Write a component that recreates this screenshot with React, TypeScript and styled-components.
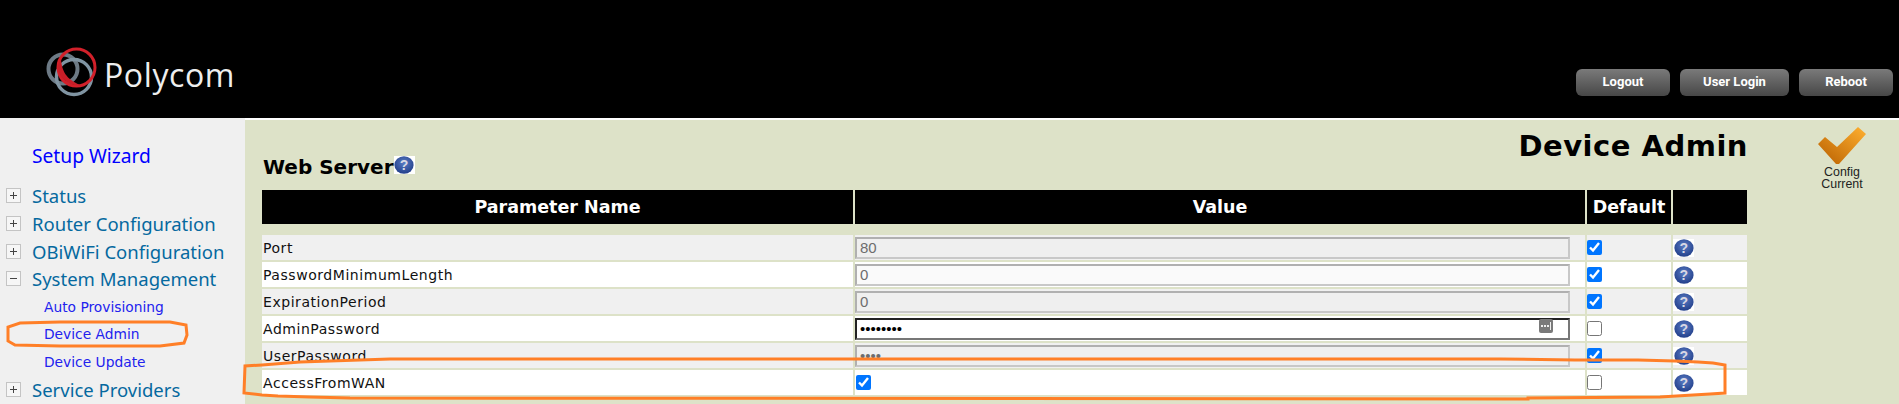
import React from 'react'
import styled, { createGlobalStyle } from 'styled-components'

const GlobalStyle = createGlobalStyle`
  html, body {
    margin: 0;
    padding: 0;
    height: 404px;
    overflow: hidden;
    background: #fff;
  }
  * { box-sizing: border-box; }
`

const Page = styled.div`
  position: relative;
  width: 1899px;
  height: 404px;
  overflow: hidden;
  font-family: 'DejaVu Sans', Verdana, sans-serif;
`
const Header = styled.header`
  display: flex;
  justify-content: space-between;
  align-items: flex-end;
  height: 118px;
  background: #000;
  padding: 0 6px 22px 46px;
`
const Logo = styled.div`
  display: flex;
  align-items: flex-start;
  margin-bottom: -1px;
`
const LogoText = styled.span`
  font-family: 'Open Sans', sans-serif;
  font-weight: 400;
  font-size: 32px;
  line-height: 36px;
  letter-spacing: 0.6px;
  color: #eeeeee;
  margin: 10px 0 0 6px;
`
const HeaderButtons = styled.div`
  display: flex;
  gap: 10px;
`
const HeaderButton = styled.button<{ $width: number }>`
  width: ${({ $width }) => $width}px;
  height: 27px;
  border: 0;
  border-radius: 6px;
  background: linear-gradient(#7a7a7a, #474747);
  color: #fff;
  font-family: Roboto, sans-serif;
  font-weight: 700;
  font-size: 13px;
  padding: 0 0 2px;
`
const Body = styled.div`
  display: flex;
  height: 286px;
`
const Sidebar = styled.nav`
  width: 245px;
  flex: none;
  background: #f0f0f0;
  padding: 24px 0 0 6px;
`
const WizardLink = styled.a`
  display: block;
  margin: 0 0 13px 26px;
  font-family: 'Noto Sans', sans-serif;
  font-size: 19.2px;
  line-height: 27px;
  color: #0000ff;
`
const MenuRow = styled.div`
  display: flex;
  align-items: center;
  height: 27.7px;
`
const MenuLabel = styled.span`
  margin-left: 11px;
  font-family: 'Noto Sans', sans-serif;
  font-size: 18.5px;
  color: #05699f;
`
const SubLink = styled.a`
  display: flex;
  align-items: center;
  height: 27.7px;
  padding-left: 38px;
  font-size: 13.8px;
  color: #2222ee;
`
const ExpandBox = styled.span`
  position: relative;
  display: block;
  width: 15px;
  height: 15px;
  flex: none;
  background: #f6f6f6;
  border: 1px solid #c4c4c4;
  &::before {
    content: '';
    position: absolute;
    left: 3px;
    top: 6px;
    width: 7px;
    height: 1px;
    background: #444;
  }
`
const PlusBox = styled(ExpandBox)`
  &::after {
    content: '';
    position: absolute;
    left: 6px;
    top: 3px;
    width: 1px;
    height: 7px;
    background: #444;
  }
`
const Main = styled.main`
  display: flex;
  flex: 1;
  margin-top: 2px;
  background: #dde2c8;
`
const Section = styled.section`
  width: 1489px;
  margin-left: 15px;
  flex: none;
`
const PageTitle = styled.h1`
  margin: 0;
  height: 36px;
  padding: 10px 1px 0 0;
  font-size: 29px;
  line-height: 32px;
  font-weight: 700;
  text-align: right;
  letter-spacing: 0.5px;
  color: #000;
`
const SectionTitle = styled.h2`
  display: flex;
  align-items: flex-start;
  margin: 0 0 0 3px;
  height: 32px;
  font-size: 20px;
  line-height: 22px;
  font-weight: 700;
  color: #000;
`
const Table = styled.table`
  width: 1489px;
  table-layout: fixed;
  border-collapse: separate;
  border-spacing: 2px;
`
const HeadCell = styled.th<{ $width: number }>`
  width: ${({ $width }) => $width}px;
  height: 34px;
  padding: 0;
  background: #000;
  color: #fff;
  font-size: 17.5px;
  font-weight: 700;
`
const SpacerRow = styled.tr`
  height: 7px;
`
const Cell = styled.td<{ $shaded: boolean }>`
  height: 25px;
  padding: 0;
  background: ${({ $shaded }) => ($shaded ? '#f0f0f0' : '#fff')};
  font-size: 14px;
  letter-spacing: 0.55px;
  color: #111;
`
const NameCell = styled(Cell)`
  padding-left: 1px;
`
const ValueWrap = styled.div`
  position: relative;
  width: 715px;
  height: 25px;
  display: flex;
  align-items: center;
`
const ValueInput = styled.input<{ $focused?: boolean }>`
  display: block;
  width: 715px;
  height: 22px;
  margin: 0;
  padding: 0 2px 0 3px;
  border-style: solid;
  border-width: 2px;
  border-color: ${({ $focused }) =>
    $focused ? '#222 #777 #777 #222' : '#b0b0b0 #c8c8c8 #c8c8c8 #b0b0b0'};
  outline: none;
  background: ${({ disabled, $focused }) =>
    $focused ? '#fff' : disabled ? '#efefef' : '#fafafa'};
  font-family: 'Liberation Sans', Arial, sans-serif;
  font-size: 15px;
  color: ${({ $focused }) => ($focused ? '#000' : '#6d6d6d')};
  &:disabled {
    opacity: 1;
    -webkit-text-fill-color: #6d6d6d;
  }
`
const RevealIcon = styled.span`
  position: absolute;
  right: 17px;
  top: 3px;
  display: flex;
  align-items: center;
  justify-content: center;
  gap: 1px;
  width: 14px;
  height: 14px;
  background: #7a7a7a;
  border-radius: 2px;
  i {
    width: 2px;
    height: 2px;
    background: #eee;
  }
  i:last-child {
    height: 8px;
    width: 1px;
  }
`
const Check = styled.input`
  display: block;
  width: 15px;
  height: 15px;
  margin: 0;
`
const WanCheck = styled(Check)`
  margin-left: 1px;
`
const HelpTile = styled.span`
  display: flex;
  flex: none;
  background: #fff;
  width: 21px;
  height: 18px;
  align-items: center;
  justify-content: center;
`
const Status = styled.aside`
  width: 190px;
  flex: none;
  display: flex;
  flex-direction: column;
  align-items: center;
  padding-top: 7px;
  margin-left: -2px;
`
const StatusText = styled.div`
  margin-top: 3px;
  font-family: 'Liberation Sans', Arial, sans-serif;
  font-size: 12.4px;
  line-height: 11.5px;
  text-align: center;
  color: #222;
`
const Annotations = styled.svg`
  position: absolute;
  left: 0;
  top: 0;
  pointer-events: none;
`

const HelpIcon = () => (
  <svg width="20" height="18" viewBox="0 0 20 18">
    <defs>
      <radialGradient id="helpBall" cx="50%" cy="38%" r="62%">
        <stop offset="0%" stopColor="#5a7cc4" />
        <stop offset="100%" stopColor="#223f8a" />
      </radialGradient>
    </defs>
    <ellipse cx="10" cy="9" rx="9.6" ry="8.8" fill="url(#helpBall)" />
    <text x="10" y="14" textAnchor="middle" fontFamily="'Liberation Sans', sans-serif" fontWeight="700" fontSize="14" fill="#d8d8e4">
      ?
    </text>
  </svg>
)

const LogoRings = () => (
  <svg width="52" height="50" viewBox="46 48 52 50">
    <circle cx="63" cy="70" r="14.5" fill="none" stroke="#6d7a85" strokeWidth="4" />
    <circle cx="74" cy="78" r="17.5" fill="none" stroke="#8094a2" strokeWidth="3.5" />
    <circle cx="76.5" cy="68.5" r="18.5" fill="none" stroke="#d2202a" strokeWidth="3" />
    <path d="M58 66 C57 78 68 87 82 87 C72 82 62 78 61 60 Z" fill="#c81e28" />
  </svg>
)

const ConfigCheck = () => (
  <svg width="48" height="37" viewBox="0 0 48 37">
    <defs>
      <linearGradient id="configTick" x1="0" y1="1" x2="1" y2="0">
        <stop offset="0%" stopColor="#b85f00" />
        <stop offset="100%" stopColor="#ffb030" />
      </linearGradient>
    </defs>
    <path d="M0 17 L7 10 L19 20 L40 0 L48 7 L21 37 L18 37 Z" fill="url(#configTick)" />
  </svg>
)

interface IParamRow {
  name: string
  value?: string
  type?: string
  disabled?: boolean
  focused?: boolean
  isDefault: boolean
}

const rows: IParamRow[] = [
  { name: 'Port', value: '80', disabled: true, isDefault: true },
  { name: 'PasswordMinimumLength', value: '0', isDefault: true },
  { name: 'ExpirationPeriod', value: '0', disabled: true, isDefault: true },
  { name: 'AdminPassword', value: 'password', type: 'password', focused: true, isDefault: false },
  { name: 'UserPassword', value: 'user', type: 'password', disabled: true, isDefault: true },
  { name: 'AccessFromWAN', isDefault: false },
]

const App = () => {
  return (
    <Page>
      <GlobalStyle />
      <Header>
        <Logo>
          <LogoRings />
          <LogoText>Polycom</LogoText>
        </Logo>
        <HeaderButtons>
          <HeaderButton $width={94}>Logout</HeaderButton>
          <HeaderButton $width={109}>User Login</HeaderButton>
          <HeaderButton $width={94}>Reboot</HeaderButton>
        </HeaderButtons>
      </Header>
      <Body>
        <Sidebar>
          <WizardLink>Setup Wizard</WizardLink>
          <MenuRow>
            <PlusBox />
            <MenuLabel>Status</MenuLabel>
          </MenuRow>
          <MenuRow>
            <PlusBox />
            <MenuLabel>Router Configuration</MenuLabel>
          </MenuRow>
          <MenuRow>
            <PlusBox />
            <MenuLabel>OBiWiFi Configuration</MenuLabel>
          </MenuRow>
          <MenuRow>
            <ExpandBox />
            <MenuLabel>System Management</MenuLabel>
          </MenuRow>
          <SubLink>Auto Provisioning</SubLink>
          <SubLink>Device Admin</SubLink>
          <SubLink>Device Update</SubLink>
          <MenuRow>
            <PlusBox />
            <MenuLabel>Service Providers</MenuLabel>
          </MenuRow>
        </Sidebar>
        <Main>
          <Section>
            <PageTitle>Device Admin</PageTitle>
            <SectionTitle>
              Web Server
              <HelpTile>
                <HelpIcon />
              </HelpTile>
            </SectionTitle>
            <Table>
              <thead>
                <tr>
                  <HeadCell $width={591}>Parameter Name</HeadCell>
                  <HeadCell $width={730}>Value</HeadCell>
                  <HeadCell $width={84}>Default</HeadCell>
                  <HeadCell $width={74} />
                </tr>
                <SpacerRow />
              </thead>
              <tbody>
                {rows.map((row, i) => {
                  const shaded = i % 2 === 0
                  return (
                    <tr key={row.name}>
                      <NameCell $shaded={shaded}>{row.name}</NameCell>
                      <Cell $shaded={shaded}>
                        {row.value !== undefined ? (
                          <ValueWrap>
                            <ValueInput
                              type={row.type || 'text'}
                              defaultValue={row.value}
                              disabled={row.disabled}
                              $focused={row.focused}
                            />
                            {row.focused && (
                              <RevealIcon>
                                <i />
                                <i />
                                <i />
                                <i />
                              </RevealIcon>
                            )}
                          </ValueWrap>
                        ) : (
                          <WanCheck type="checkbox" defaultChecked />
                        )}
                      </Cell>
                      <Cell $shaded={shaded}>
                        <Check type="checkbox" defaultChecked={row.isDefault} />
                      </Cell>
                      <Cell $shaded={shaded}>
                        <HelpTile>
                          <HelpIcon />
                        </HelpTile>
                      </Cell>
                    </tr>
                  )
                })}
              </tbody>
            </Table>
          </Section>
          <Status>
            <ConfigCheck />
            <StatusText>
              Config
              <br />
              Current
            </StatusText>
          </Status>
        </Main>
      </Body>
      <Annotations width="1899" height="404" viewBox="0 0 1899 404">
        <path
          d="M8 335 L8 327 L20 323 L60 322 L170 322 L186 325 L187 335 L184 343 L160 346 L60 346 L15 345 L8 341 Z"
          fill="none"
          stroke="#ff7f27"
          strokeWidth="3"
        />
        <path
          d="M245 366 L244 393 L262 395 L278 396 L310 397 L350 398 L1528 399 L1528 398 L1660 397 L1693 395 L1710 394 L1725 393 L1725 365 L1713 363 L1698 362 L1675 361 L1638 360 L1575 360 L1501 359 L390 359 L300 362 L262 365 Z"
          fill="none"
          stroke="#ff7f27"
          strokeWidth="3"
        />
      </Annotations>
    </Page>
  )
}

export default App
